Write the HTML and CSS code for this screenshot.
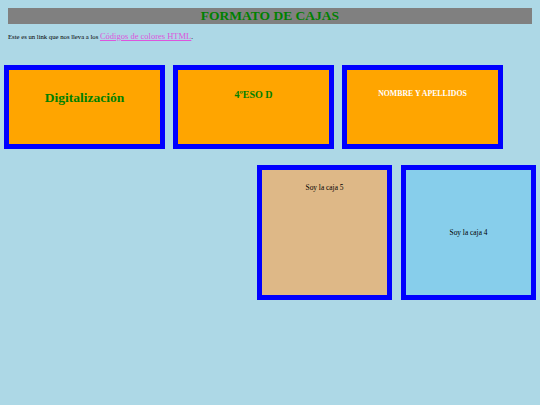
FILE: index.html
```html
<!DOCTYPE html>
<html lang="es">
<head>
<meta charset="utf-8">
<title>Formato de cajas</title>
<link rel="stylesheet" href="styles.css">
</head>
<body>
<h1 class="title">FORMATO DE CAJAS</h1>
<p class="intro">Este es un link que nos lleva a los <a class="link" href="#">Códigos de colores HTML</a>.</p>
<div class="row-top">
  <div class="box box-orange b1"><span>Digitalización</span></div>
  <div class="box box-orange b2"><span>4ºESO D</span></div>
  <div class="box box-orange b3"><span>NOMBRE Y APELLIDOS</span></div>
</div>
<div class="row-bottom">
  <div class="box sq box5"><span>Soy la caja 5</span></div>
  <div class="box sq box4"><span>Soy la caja 4</span></div>
</div>
</body>
</html>
```
FILE: styles.css
```css
html, body {
  margin: 0;
  padding: 0;
}
body {
  background: #add8e6;
  font-family: "Liberation Serif", "Times New Roman", serif;
  width: 540px;
  height: 405px;
  overflow: hidden;
}
.title {
  margin: 8px 8px 0 8px;
  height: 16px;
  line-height: 16px;
  background: #808080;
  color: #008000;
  font-size: 13.5px;
  font-weight: bold;
  text-align: center;
}
.intro {
  margin: 6px 8px 0 8px;
  font-size: 6.7px;
  line-height: 12px;
  color: #000;
}
.link {
  color: #dd55dd;
  font-size: 8.5px;
}
.row-top {
  display: flex;
  gap: 8px;
  margin: 22px 0 0 4px;
}
.box {
  box-sizing: border-box;
  border: 5px solid #0000ff;
  text-align: center;
}
.box-orange {
  background: #ffa500;
  width: 161px;
  height: 84px;
}
.b1 {
  padding-top: 19px;
  color: #008000;
  font-weight: bold;
  font-size: 13.5px;
  line-height: 17px;
}
.b2 {
  padding-top: 19px;
  color: #008000;
  font-weight: bold;
  font-size: 10px;
  line-height: 12px;
}
.b3 {
  padding-top: 19px;
  color: #ffffff;
  font-weight: bold;
  font-size: 7.8px;
  line-height: 10px;
}
.row-bottom {
  display: flex;
  justify-content: flex-end;
  gap: 9px;
  margin: 16px 4px 0 0;
}
.sq {
  width: 135px;
  height: 135px;
  font-size: 7.4px;
  line-height: 9px;
  color: #000;
}
.box5 {
  background: #deb887;
  padding-top: 13px;
}
.box4 {
  background: #87ceeb;
  display: flex;
  align-items: center;
  justify-content: center;
}
```
